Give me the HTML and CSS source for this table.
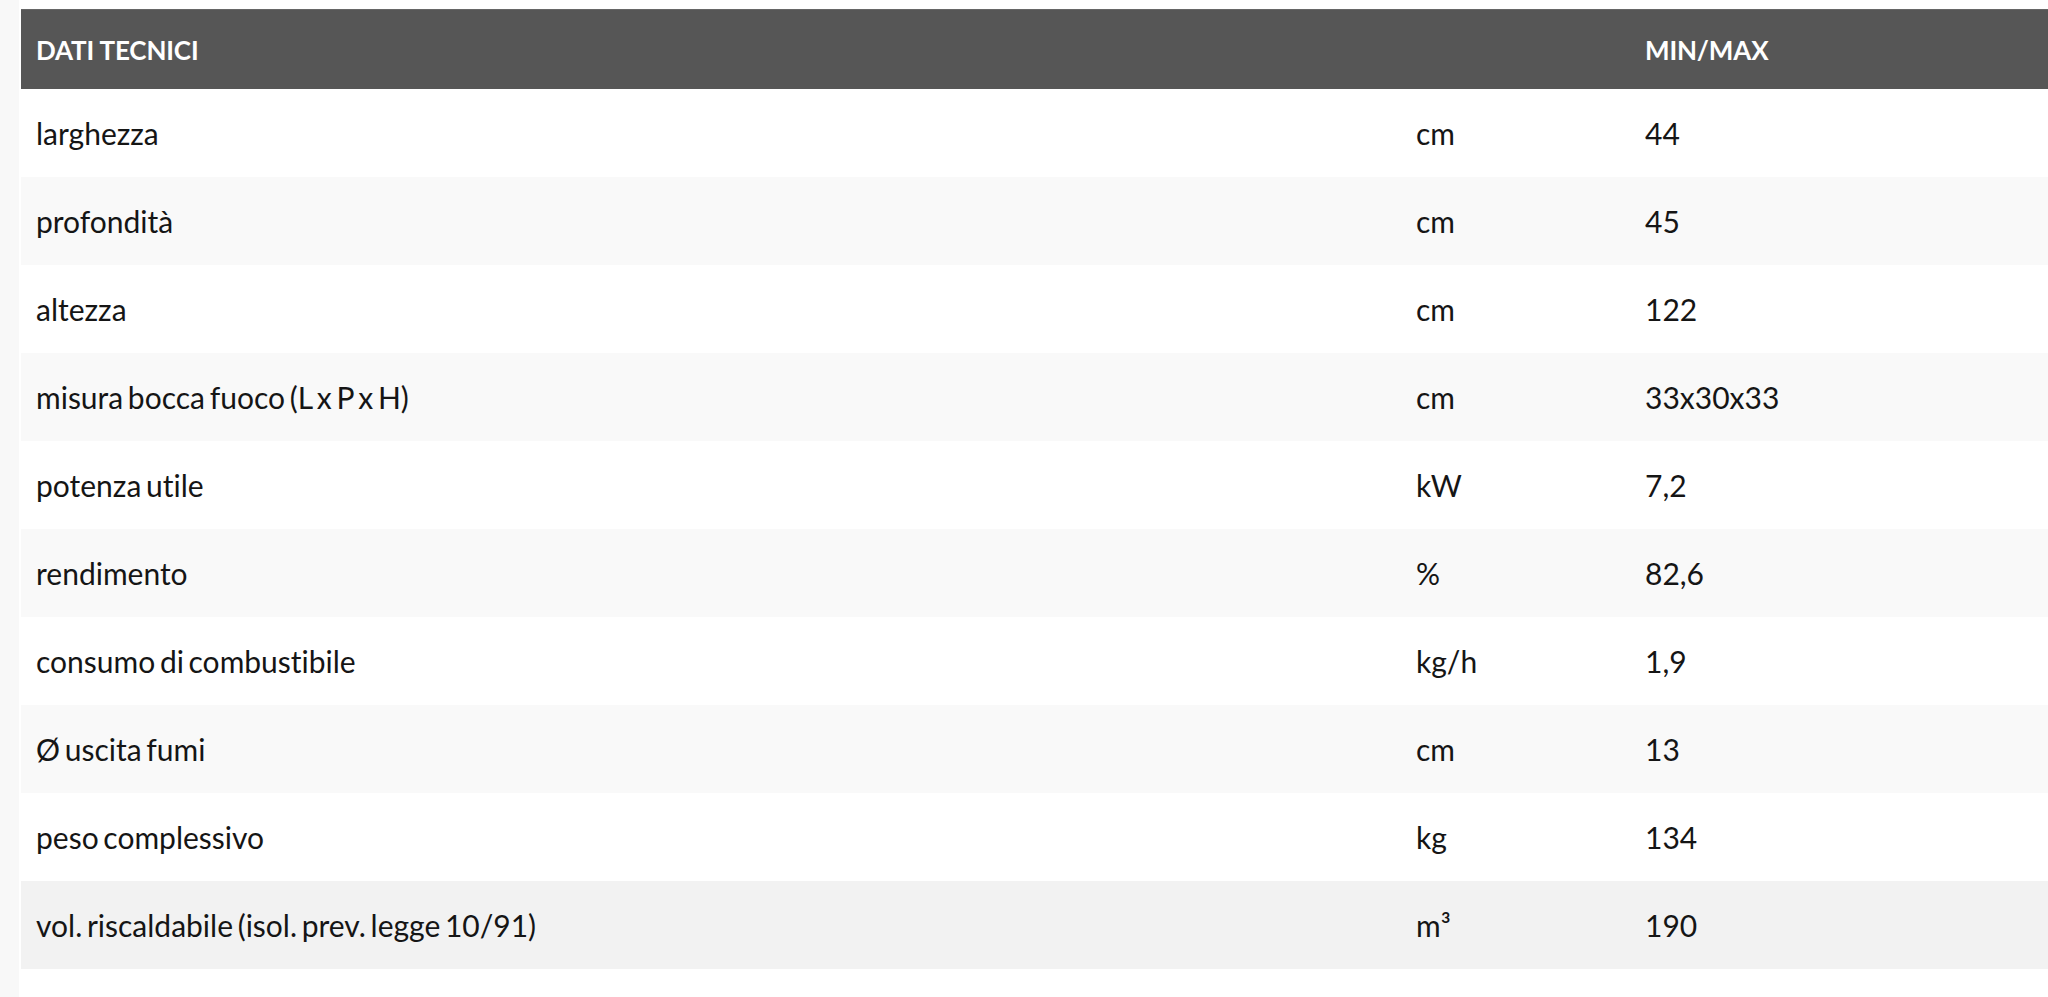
FILE: index.html
```html
<!DOCTYPE html>
<html lang="it">
<head>
<meta charset="utf-8">
<title>Dati tecnici</title>
<link rel="stylesheet" href="styles.css">
</head>
<body>
<div class="page">
  <aside class="side"></aside>
  <main class="content">
    <div class="table">
      <div class="row head">
        <div class="cell">DATI TECNICI</div>
        <div class="cell"></div>
        <div class="cell">MIN/MAX</div>
      </div>
      <div class="row">
        <div class="cell">larghezza</div><div class="cell">cm</div><div class="cell">44</div>
      </div>
      <div class="row alt">
        <div class="cell">profondità</div><div class="cell">cm</div><div class="cell">45</div>
      </div>
      <div class="row">
        <div class="cell">altezza</div><div class="cell">cm</div><div class="cell">122</div>
      </div>
      <div class="row alt">
        <div class="cell">misura bocca fuoco (L x P x H)</div><div class="cell">cm</div><div class="cell">33x30x33</div>
      </div>
      <div class="row">
        <div class="cell">potenza utile</div><div class="cell">kW</div><div class="cell">7,2</div>
      </div>
      <div class="row alt">
        <div class="cell">rendimento</div><div class="cell">%</div><div class="cell">82,6</div>
      </div>
      <div class="row">
        <div class="cell">consumo di combustibile</div><div class="cell">kg/h</div><div class="cell">1,9</div>
      </div>
      <div class="row alt">
        <div class="cell">Ø uscita fumi</div><div class="cell">cm</div><div class="cell">13</div>
      </div>
      <div class="row">
        <div class="cell">peso complessivo</div><div class="cell">kg</div><div class="cell">134</div>
      </div>
      <div class="row hover">
        <div class="cell">vol. riscaldabile (isol. prev. legge 10/91)</div><div class="cell">m³</div><div class="cell">190</div>
      </div>
    </div>
  </main>
</div>
</body>
</html>
```

FILE: styles.css
```css
html, body {
  margin: 0;
  padding: 0;
  background: #ffffff;
  overflow: hidden;
}

.page {
  display: flex;
  gap: 2px;
  min-height: 997px;
  font-family: Lato, "Open Sans", sans-serif;
  color: #151515;
}

.side {
  width: 19px;
  flex: 0 0 19px;
  background: #f8f8f8;
}

.content {
  flex: 1;
  padding-top: 9px;
  min-width: 0;
}

.table {
  display: flex;
  flex-direction: column;
  width: 2100px;
}

.row {
  display: grid;
  grid-template-columns: 1380px 229px 1fr;
  height: 88px;
  align-items: center;
  background: #ffffff;
  font-size: 30px;
  word-spacing: -3px;
  font-variant-ligatures: no-common-ligatures;
}

.row.alt {
  background: #f9f9f9;
}

.row.hover {
  background: #f2f2f2;
}

.cell {
  padding: 0 16px 0 15px;
  white-space: nowrap;
}

.row.head {
  height: 80px;
  background: #565656;
  color: #ffffff;
  font-weight: 700;
  font-size: 26px;
  word-spacing: 0;
  letter-spacing: -0.15px;
  border-top: 1px solid #666666;
  box-sizing: border-box;
}
```
